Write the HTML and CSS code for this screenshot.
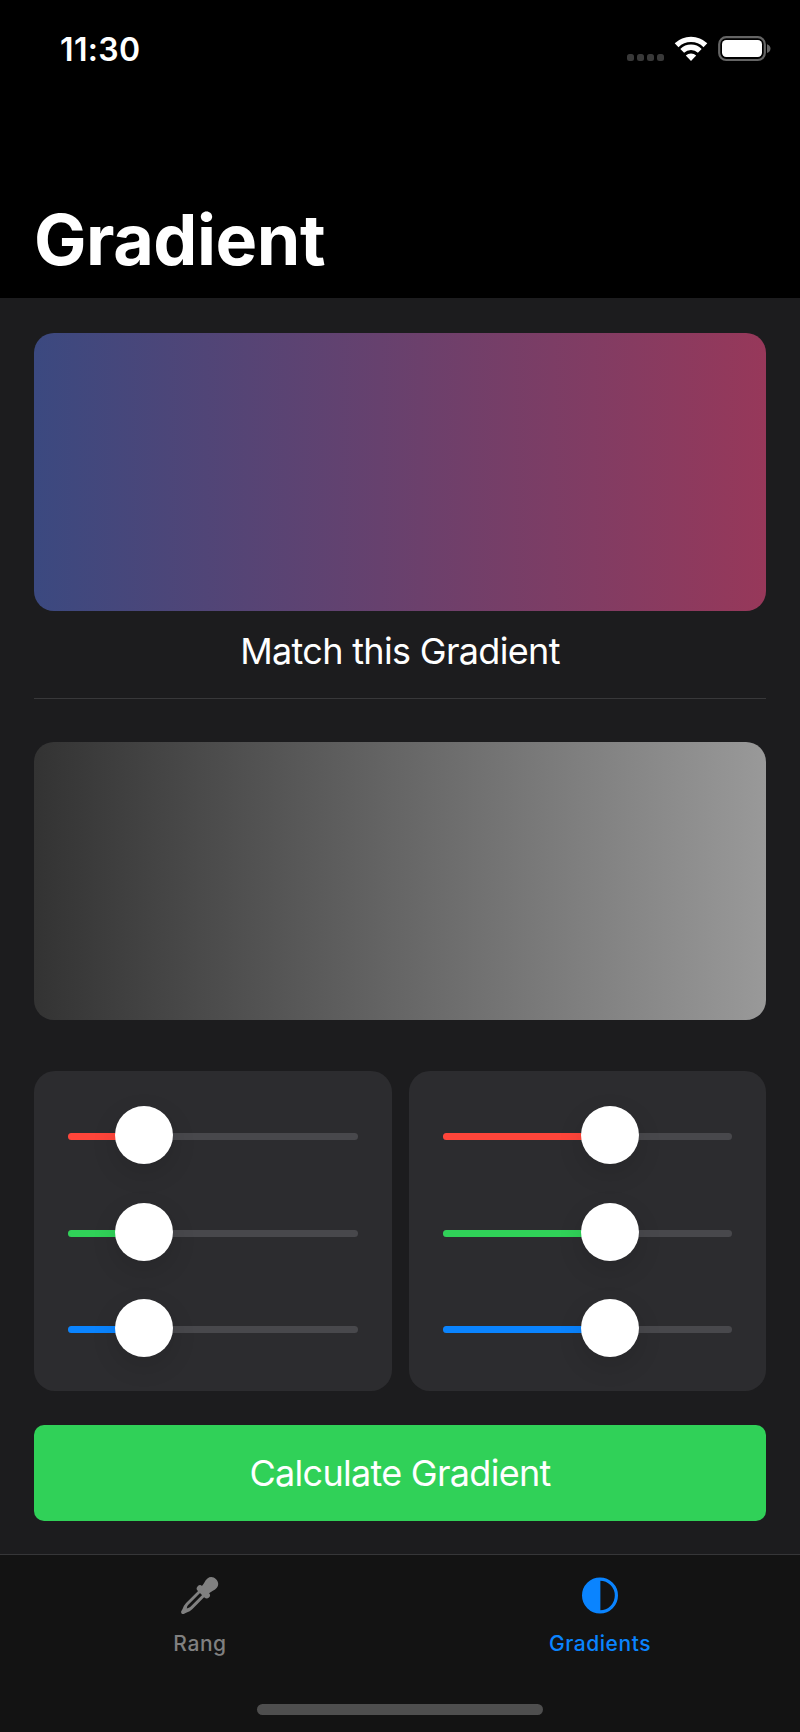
FILE: index.html
```html
<!DOCTYPE html>
<html lang="en">
<head>
<meta charset="utf-8">
<title>Gradient</title>
<link rel="stylesheet" href="styles.css">
</head>
<body>
<header class="header">
  <div class="status">
    <span class="time">11:30</span>
    <div class="status-icons">
      <span class="cell"><i></i><i></i><i></i><i></i></span>
      <svg class="wifi" width="34" height="26" viewBox="0 0 34 26">
        <path fill="none" stroke="#fff" stroke-width="5.4" d="M2.6 9.2a20.6 20.6 0 0 1 28.8 0M8.2 14.9a12.6 12.6 0 0 1 17.6 0"/>
        <path fill="#fff" d="M17 25l-5.2-5.4a7.6 7.6 0 0 1 10.4 0z"/>
      </svg>
      <svg class="battery" width="53" height="26" viewBox="0 0 53 26">
        <rect x="1.2" y="1.2" width="45.6" height="22.8" rx="7" fill="none" stroke="#656565" stroke-width="2.2"/>
        <rect x="4" y="4" width="40" height="17" rx="4.2" fill="#fff"/>
        <path fill="#656565" d="M49 8.2q3.5 1.3 3.5 4.4t-3.5 4.4z"/>
      </svg>
    </div>
  </div>
  <h1 class="title">Gradient</h1>
</header>
<main class="content">
  <div class="swatch target"></div>
  <p class="caption"><span>Match this Gradient</span></p>
  <div class="swatch guess"></div>
  <div class="panels">
    <section class="panel low">
      <div class="slider red"><div class="fill"></div><div class="thumb"></div></div>
      <div class="slider green"><div class="fill"></div><div class="thumb"></div></div>
      <div class="slider blue"><div class="fill"></div><div class="thumb"></div></div>
    </section>
    <section class="panel high">
      <div class="slider red"><div class="fill"></div><div class="thumb"></div></div>
      <div class="slider green"><div class="fill"></div><div class="thumb"></div></div>
      <div class="slider blue"><div class="fill"></div><div class="thumb"></div></div>
    </section>
  </div>
  <button class="calculate"><span>Calculate Gradient</span></button>
</main>
<nav class="tabs">
  <div class="tab-row">
    <a class="tab">
      <svg width="40" height="40" viewBox="0 0 40 40">
        <g transform="translate(1.6 37.6) rotate(45) scale(.97)" fill="#808080">
          <path fill-rule="evenodd" d="M-4.5-31.5V-11Q-4.5-8-2.6-4L-1.9-1.2Q0 1 1.9-1.2L2.6-4Q4.5-8 4.5-11V-31.5zM-1.5-31H1.5V-11Q1.5-9.5 0-7.5Q-1.5-9.5-1.5-11z"/>
          <rect x="-8.2" y="-35" width="16.4" height="6.6" rx="3.3"/>
          <path d="M-5.2-32Q-5-36-6-39C-8.6-46-5.2-50.2 0-50.2S8.6-46 6-39Q5-36 5.2-32z"/>
        </g>
      </svg>
      <span class="label-rang">Rang</span>
    </a>
    <a class="tab active">
      <svg width="40" height="40" viewBox="0 0 40 40">
        <circle cx="20" cy="19.5" r="16.4" fill="none" stroke="#0a84ff" stroke-width="3.2"/>
        <path fill="#0a84ff" d="M20.4 2.3v34.4A17.2 17.2 0 0 1 20.4 2.3z"/>
      </svg>
      <span class="label-gradients">Gradients</span>
    </a>
  </div>
  <div class="home"></div>
</nav>
</body>
</html>
```
FILE: styles.css
```css
* { box-sizing: border-box; }
body {
  margin: 0;
  width: 800px;
  height: 1732px;
  display: flex;
  flex-direction: column;
  background: #1c1c1e;
  color: #fff;
  font-family: Inter, "Liberation Sans", sans-serif;
}
.header {
  height: 298px;
  background: #000;
  padding: 29px 29.5px 0 60px;
}
.status { display: flex; justify-content: space-between; height: 40px; }
.time { font-size: 32px; line-height: 41px; font-weight: 600; letter-spacing: 0.35px; }
.status-icons { display: flex; align-items: flex-start; padding-top: 7px; }
.cell { display: flex; gap: 3px; padding-top: 18px; margin-right: 10px; }
.cell i { width: 7px; height: 7px; border-radius: 2.5px; background: #393939; }
.wifi { margin-right: 10px; }
.title {
  margin: 128px 0 0 -26px;
  font-size: 70px;
  line-height: 86px;
  font-weight: 700;
  letter-spacing: -0.45px;
}
.content { height: 1256px; padding: 35px 34px 0; }
.swatch { height: 278px; border-radius: 20px; }
.target { background: linear-gradient(90deg, #3b4980, #97385a); }
.guess { background: linear-gradient(90deg, #333, #999); }
.caption {
  margin: 0 0 43px;
  height: 88px;
  padding-top: 18px;
  border-bottom: 1px solid #38383a;
  text-align: center;
  font-size: 36px;
  line-height: 44px;
  letter-spacing: -0.68px;
}
.panels { display: grid; grid-template-columns: 358px 357px; gap: 17px; margin-top: 51px; }
.panel {
  height: 320px;
  padding: 35px 34px;
  border-radius: 21px;
  background: #2c2c2f;
  display: flex;
  flex-direction: column;
  gap: 38.5px;
}
.slider {
  height: 58px;
  display: flex;
  align-items: center;
  position: relative;
}
.slider::before {
  content: "";
  position: absolute;
  left: 0;
  right: 0;
  top: 27px;
  height: 7px;
  border-radius: 4px;
  background: #48484c;
}
.fill { height: 7px; margin-top: 3px; border-radius: 4px 0 0 4px; position: relative; }
.low .fill { width: 48px; }
.high .fill { width: 139px; }
.thumb {
  width: 58px;
  height: 58px;
  flex: none;
  margin-left: -1px;
  border-radius: 50%;
  background: #fff;
  position: relative;
  box-shadow: 0 9px 26px rgba(0, 0, 0, 0.12);
}
.red .fill { background: #ff453a; }
.green .fill { background: #30d158; }
.blue .fill { background: #0a84ff; }
.calculate {
  display: block;
  width: 100%;
  height: 96px;
  margin-top: 34px;
  padding: 0;
  border: 0;
  border-radius: 10px;
  background: #30d158;
  color: #fff;
  font: 400 36px/44px Inter, "Liberation Sans", sans-serif;
  letter-spacing: -0.72px;
}
.tabs {
  height: 178px;
  border-top: 1px solid #363638;
  background: #131313;
  display: flex;
  flex-direction: column;
  align-items: center;
}
.tab-row { display: flex; width: 100%; height: 149px; padding-top: 21px; }
.tab {
  flex: 1;
  display: flex;
  flex-direction: column;
  align-items: center;
  gap: 14px;
  color: #808080;
  font-size: 21px;
  line-height: 28px;
  font-weight: 500;
  letter-spacing: 0.55px;
}
.active { color: #0a84ff; }
.home { width: 286px; height: 11px; border-radius: 6px; background: #4e4e4e; }
```
